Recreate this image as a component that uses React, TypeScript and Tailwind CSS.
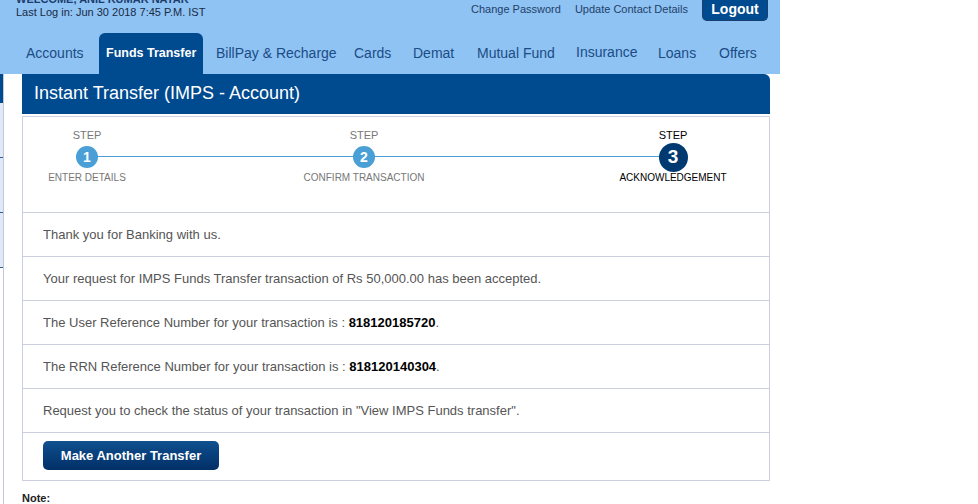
import React from 'react'

const NAV = [
  { label: 'Accounts', w: 'w-[73px]' },
  { label: 'Funds Transfer', w: 'w-[104px] mr-[13px]', active: true },
  { label: 'BillPay & Recharge', w: 'w-[138px]' },
  { label: 'Cards', w: 'w-[59px]' },
  { label: 'Demat', w: 'w-[64px]' },
  { label: 'Mutual Fund', w: 'w-[99px]' },
  { label: 'Insurance', w: 'w-[82px] -mt-[2px]' },
  { label: 'Loans', w: 'w-[61px]' },
  { label: 'Offers', w: 'w-[50px]' },
]

function Header() {
  return (
    <div className="h-[74px] bg-[#8fc3f3] flex flex-col">
      <div className="h-[33px] flex justify-between">
        <div className="pl-[16px] text-[11px] leading-[13px] text-[#1a2a44]">
          <div className="-mt-[7px] font-bold text-[#1c3d6e]">WELCOME, ANIL KUMAR NAYAK</div>
          <div>Last Log in: Jun 30 2018 7:45 P.M. IST</div>
        </div>
        <div className="flex items-start pr-[12px] text-[11px] text-[#1f3f6a]">
          <span className="mt-[3px] leading-[13px]">Change Password</span>
          <span className="mt-[3px] ml-[14px] leading-[13px]">Update Contact Details</span>
          <button className="ml-[14px] w-[66px] h-[21px] rounded-b-[5px] bg-[#004a8f] border border-t-0 border-[#1a3f6e] text-white font-bold text-[14px] leading-[16px] pb-[2px]">
            Logout
          </button>
        </div>
      </div>
      <div className="h-[41px] flex items-center pl-[26px]">
        {NAV.map(n =>
          n.active ? (
            <div
              key={n.label}
              className={`${n.w} self-stretch flex items-center pl-[7px] bg-[#004a8f] rounded-t-[6px] text-white font-bold text-[12.5px]`}
            >
              {n.label}
            </div>
          ) : (
            <div key={n.label} className={`${n.w} text-[14px] text-[#1b4c86] whitespace-nowrap`}>
              {n.label}
            </div>
          )
        )}
      </div>
    </div>
  )
}

function Step({ n, label, current, cls }: { n: number; label: string; current?: boolean; cls: string }) {
  return (
    <div className={`${cls} relative flex flex-col items-center`}>
      <div className={`text-[11px] leading-[14px] ${current ? 'text-black' : 'text-[#777]'}`}>STEP</div>
      <div className="mt-[1px] h-[28px] flex items-center justify-center">
        {current ? (
          <div className="w-[29px] h-[29px] rounded-full bg-[#003a70] text-white font-bold text-[19px] flex items-center justify-center">
            {n}
          </div>
        ) : (
          <div className="w-[22px] h-[22px] rounded-full bg-[#4a9fd6] text-white font-bold text-[14px] flex items-center justify-center">
            {n}
          </div>
        )}
      </div>
      <div className={`mt-[1px] text-[10px] leading-[12px] whitespace-nowrap ${current ? 'text-black' : 'text-[#777]'}`}>{label}</div>
    </div>
  )
}

function Row({ children }: { children: React.ReactNode }) {
  return (
    <div className="h-[44px] border-b border-[#cdd0e0] flex items-center pl-[20px] text-[13px] text-[#555]">
      {children}
    </div>
  )
}

export default function App() {
  return (
    <div className="w-[978px] h-[504px] overflow-hidden bg-white font-['Liberation_Sans',Arial,sans-serif]">
      <div className="w-[780px]">
        <Header />
        <div className="flex">
          <div className="w-[4px] h-[430px] border-r border-[#c3c8d6] flex flex-col">
            <div className="h-[29px] bg-[#004a8f]" />
            <div className="h-[55px] bg-[#dde9f6] border-b border-[#2e5d9a]" />
            <div className="h-[55px] bg-[#dde9f6] border-b border-[#2e5d9a]" />
            <div className="h-[55px] bg-[#dde9f6] border-b border-[#2e5d9a]" />
          </div>
          <div className="ml-[18px] w-[748px]">
            <div className="h-[40px] bg-[#004a8f] rounded-tr-[6px] flex items-center pl-[12px] pb-[2px] text-white text-[18px]">
              Instant Transfer (IMPS - Account)
            </div>
            <div className="mt-[2px] border border-[#cdd0e0]">
              <div className="relative h-[96px] border-b border-[#cdd0e0] pt-[11px] flex items-start">
                <div className="absolute top-[39px] left-[64px] right-[96px] h-px bg-[#4a9fd6]" />
                <Step n={1} label="ENTER DETAILS" cls="w-[120px] ml-[4px]" />
                <Step n={2} label="CONFIRM TRANSACTION" cls="w-[140px] ml-[147px]" />
                <Step n={3} label="ACKNOWLEDGEMENT" current cls="w-[120px] ml-[179px]" />
              </div>
              <Row>Thank you for Banking with us.</Row>
              <Row>Your request for IMPS Funds Transfer transaction of Rs 50,000.00 has been accepted.</Row>
              <Row>
                The User Reference Number for your transaction is :&nbsp;
                <span className="font-bold text-black">818120185720</span>.
              </Row>
              <Row>
                The RRN Reference Number for your transaction is :&nbsp;
                <span className="font-bold text-black">818120140304</span>.
              </Row>
              <Row>Request you to check the status of your transaction in "View IMPS Funds transfer".</Row>
              <div className="h-[47px] pt-[8px] pl-[20px]">
                <button className="w-[176px] h-[29px] rounded-[5px] bg-gradient-to-b from-[#10508f] to-[#032f66] text-white font-bold text-[13px]">
                  Make Another Transfer
                </button>
              </div>
            </div>
            <div className="mt-[11px] text-[11px] leading-[13px] font-bold text-[#222]">Note:</div>
          </div>
        </div>
      </div>
    </div>
  )
}
